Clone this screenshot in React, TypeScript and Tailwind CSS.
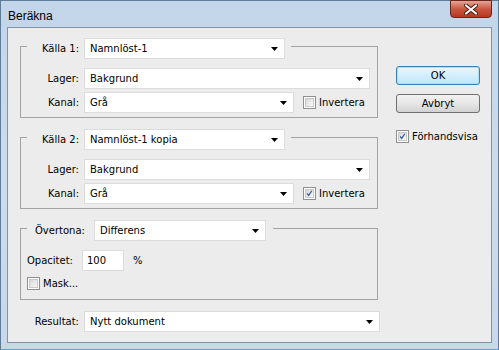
import React from "react";

const font = { fontFamily: '"DejaVu Sans", Tahoma, sans-serif' };

function Arrow() {
  return (
    <svg width="7" height="4" viewBox="0 0 7 4" className="shrink-0">
      <polygon points="0,0 7,0 3.5,4" fill="#000" />
    </svg>
  );
}

function Select({ value, w }: { value: string; w: string }) {
  return (
    <div
      className={`${w} h-[21px] shrink-0 bg-white border border-[#dcdcdc] flex items-center justify-between pl-[5px] pr-[6px]`}
    >
      <span>{value}</span>
      <Arrow />
    </div>
  );
}

function Checkbox({ checked = false }: { checked?: boolean }) {
  return (
    <div className="w-[13px] h-[13px] shrink-0 border border-[#8e8f8f] bg-white p-[1px]">
      <div className="w-full h-full bg-gradient-to-br from-[#d6d6d6] to-[#fbfbfb] border border-[#c9c9c9] flex items-center justify-center">
        {checked && (
          <svg width="9" height="9" viewBox="0 0 9 9">
            <path d="M1.5 4.5 L3.5 7 L7.5 1" fill="none" stroke="#3d5a9e" strokeWidth="1.6" />
          </svg>
        )}
      </div>
    </div>
  );
}

function Label({ children }: { children: React.ReactNode }) {
  return <div className="w-[58px] text-right pr-[0px] shrink-0 mr-[5px]">{children}</div>;
}

function SourceGroup({ n, file, inverted }: { n: number; file: string; inverted: boolean }) {
  return (
    <div className="border border-[#a3a3a3] pb-[4px]">
      <div className="-mt-[9px] ml-[6px] w-fit flex items-center bg-[#ececec] pr-[6px]">
        <div className="w-[52px] text-right mr-[5px] shrink-0">Källa {n}:</div>
        <Select value={file} w="w-[201px]" />
      </div>
      <div className="mt-[9px] flex items-center">
        <Label>Lager:</Label>
        <Select value="Bakgrund" w="w-[286px]" />
      </div>
      <div className="mt-[3px] flex items-center">
        <Label>Kanal:</Label>
        <Select value="Grå" w="w-[210px]" />
        <div className="ml-[9px] flex items-center gap-[3px]">
          <Checkbox checked={inverted} />
          <span>Invertera</span>
        </div>
      </div>
    </div>
  );
}

export default function App() {
  return (
    <div
      className="w-[499px] h-[350px] flex flex-col bg-gradient-to-b from-[#c2d5e9] via-[#cddcec] to-[#c8d8ea] border border-[#5f7c99] border-b-[#35b4e6] text-[10px] text-black"
      style={font}
    >
      <div className="h-[26px] flex items-start justify-between shrink-0">
        <span
          className="pl-[7px] pt-[6px] text-[12px] text-black"
          style={{ fontFamily: '"Liberation Sans", Arial, sans-serif' }}
        >
          Beräkna
        </span>
        <div className="mr-[6px] -mt-[1px] w-[42px] h-[18px] rounded-b-[4px] border border-[#6b2418] bg-gradient-to-b from-[#e3a598] via-[#c9563f] to-[#b9371f] flex items-center justify-center">
          <svg width="14" height="11" viewBox="0 0 14 11">
            <path d="M2 1.5 L12 9.5 M12 1.5 L2 9.5" stroke="#4a1a12" strokeWidth="4" strokeLinecap="round" />
            <path d="M2 1.5 L12 9.5 M12 1.5 L2 9.5" stroke="#ffffff" strokeWidth="2.2" strokeLinecap="round" />
          </svg>
        </div>
      </div>
      <div className="mx-[6px] mb-[6px] flex-1 border border-[#8492a4] bg-[#ececec] flex pt-[18px] pl-[12px]">
        <div className="w-[358px] shrink-0 flex flex-col">
          <SourceGroup n={1} file="Namnlöst-1" inverted={false} />
          <div className="mt-[19px]">
            <SourceGroup n={2} file="Namnlöst-1 kopia" inverted={true} />
          </div>
          <div className="mt-[19px] border border-[#a3a3a3] pb-[8px]">
            <div className="-mt-[9px] ml-[6px] w-fit flex items-center bg-[#ececec] pr-[7px]">
              <div className="w-[67px] pl-[8px] shrink-0">Övertona:</div>
              <Select value="Differens" w="w-[172px]" />
            </div>
            <div className="mt-[9px] ml-[6px] flex items-center">
              <div className="w-[55px] shrink-0">Opacitet:</div>
              <div className="w-[42px] h-[21px] bg-white border border-[#dcdcdc] flex items-center pl-[4px]">100</div>
              <span className="ml-[9px]">%</span>
            </div>
            <div className="mt-[5px] ml-[6px] flex items-center gap-[3px]">
              <Checkbox />
              <span>Mask...</span>
            </div>
          </div>
          <div className="mt-[11px] ml-[1px] flex items-center">
            <Label>Resultat:</Label>
            <Select value="Nytt dokument" w="w-[296px]" />
          </div>
        </div>
        <div className="ml-[18px] pt-[20px] w-[84px] shrink-0 flex flex-col">
          <div className="h-[19px] rounded-[3px] border border-[#3c7fb1] bg-gradient-to-b from-[#eaf6fd] to-[#bee6fd] flex items-center justify-center shadow-[inset_0_0_0_1px_#a7e0fb]">
            OK
          </div>
          <div className="mt-[9px] h-[19px] rounded-[3px] border border-[#707070] bg-gradient-to-b from-[#f2f2f2] via-[#e6e6e6] to-[#d2d2d2] flex items-center justify-center">
            Avbryt
          </div>
          <div className="mt-[16px] flex items-center gap-[3px]">
            <Checkbox checked />
            <span>Förhandsvisa</span>
          </div>
        </div>
      </div>
    </div>
  );
}
